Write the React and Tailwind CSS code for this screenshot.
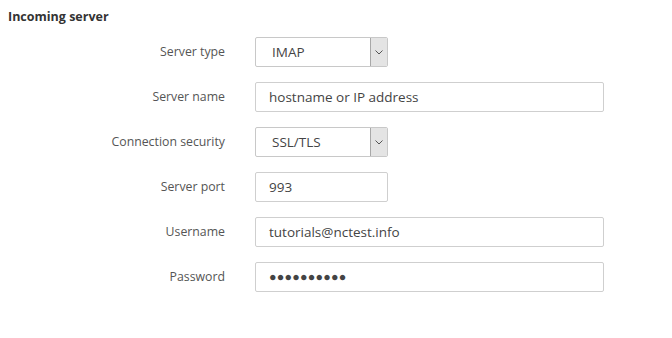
import React from "react";

const font = { fontFamily: '"Open Sans", "Noto Sans", sans-serif' };

function Chevron() {
  return (
    <svg width="8" height="5" viewBox="0 0 8 5" fill="none">
      <path d="M0.5 0.5 L4 4 L7.5 0.5" stroke="#555" strokeWidth="1" />
    </svg>
  );
}

function Select({ value }) {
  return (
    <div className="flex h-[30px] w-[133px] rounded-[2px] border border-[#c8c8c8] bg-white overflow-hidden">
      <div className="flex flex-1 items-center pl-[16px] text-[13.5px] text-[#444]">{value}</div>
      <div className="flex w-[18px] items-center justify-center border-l border-[#a8a8a8] bg-[#e4e4e4] border-y border-r -my-px -mr-px">
        <Chevron />
      </div>
    </div>
  );
}

function Input({ value, w = "w-[349px]", password }) {
  return (
    <div className={`flex h-[30px] ${w} items-center rounded-[2px] border border-[#cfcfcf] bg-white pl-[13px] text-[#444] ${password ? "text-[12.5px] tracking-[0.2px]" : "text-[13.5px]"}`}>
      {value}
    </div>
  );
}

function Row({ label, children }) {
  return (
    <div className="flex h-[45px] items-center">
      <div className="w-[225px] text-right text-[12.3px] text-[#555]">{label}</div>
      <div className="ml-[30px]">{children}</div>
    </div>
  );
}

export default function App() {
  return (
    <div className="h-[338px] w-[672px] bg-white" style={font}>
      <div className="pl-[8px] pt-[8px] text-[12.5px] font-bold text-[#333]">Incoming server</div>
      <div className="mt-[3px]">
        <Row label="Server type"><Select value="IMAP" /></Row>
        <Row label="Server name"><Input value="hostname or IP address" /></Row>
        <Row label="Connection security"><Select value="SSL/TLS" /></Row>
        <Row label="Server port"><Input value="993" w="w-[133px]" /></Row>
        <Row label="Username"><Input value="tutorials@nctest.info" /></Row>
        <Row label="Password"><Input value="●●●●●●●●●●" password /></Row>
      </div>
    </div>
  );
}
